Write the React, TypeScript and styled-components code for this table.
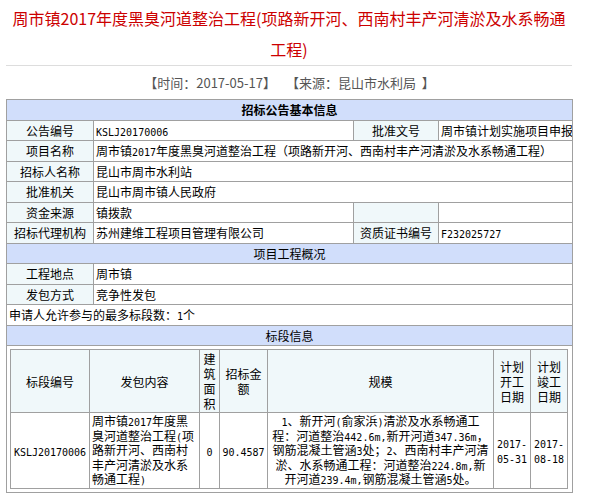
import React from "react";
import styled, { createGlobalStyle } from "styled-components";

const GlobalStyle = createGlobalStyle`
  html, body { margin: 0; padding: 0; background: #ffffff; }
  body { font-family: "Noto Sans CJK SC", "Noto Sans", sans-serif; color: #000000; }
`;

const Page = styled.div`
  width: 567px;
  margin-left: 6px;
`;

const Title = styled.h1`
  margin: 0;
  padding: 3px 4px 0;
  font-size: 16px;
  font-weight: normal;
  line-height: 31px;
  color: #cc0000;
  text-align: center;
  border-bottom: 1px solid #dddddd;
  width: 558px;
`;

const Meta = styled.div`
  display: flex;
  justify-content: center;
  gap: 10px;
  height: 33px;
  line-height: 33px;
  font-size: 13px;
  color: #555555;
  white-space: pre;
`;

const InfoTable = styled.table`
  width: 567px;
  border-collapse: collapse;
  table-layout: fixed;
  font-size: 12px;
  line-height: 15px;
`;

const Row = styled.tr`
  height: 20.5px;
`;

const Cell = styled.td`
  border: 1px solid #a0a0a0;
  padding: 0 2px;
  white-space: nowrap;
  overflow: hidden;
`;

const HeadCell = styled(Cell)<{ $bold?: boolean }>`
  background: #d1defb;
  text-align: center;
  font-weight: ${(p) => (p.$bold ? 700 : 400)};
`;

const LabelCell = styled(Cell)`
  background: #f0f8fa;
  text-align: center;
`;

const ValueCell = styled(Cell)`
  background: #ffffff;
  text-align: left;
`;

const NestCell = styled.td`
  border: 1px solid #a0a0a0;
  padding: 3px;
`;

const LotTable = styled.table`
  width: 558px;
  border-collapse: collapse;
  table-layout: fixed;
  font-size: 12px;
  line-height: 15px;
`;

const LotHead = styled.th`
  border: 1px solid #a0a0a0;
  background: #f0f8fa;
  font-weight: normal;
  padding: 1px 2px;
  text-align: center;
  vertical-align: middle;
`;

const LotCell = styled.td<{ $align?: "left" | "center" }>`
  border: 1px solid #a0a0a0;
  padding: 1px 2px;
  text-align: ${(p) => p.$align ?? "center"};
  vertical-align: middle;
`;

const Line = styled.span`
  display: block;
  white-space: nowrap;
  line-height: 14.6px;
`;

const Latin = styled.span`
  font-family: "DejaVu Sans Mono", monospace;
  font-size: 10px;
  line-height: 1;
`;

const Mixed = ({ text }: { text: string }) => {
  const parts = text.split(/([\x20-\x7e]+)/);
  return (
    <>
      {parts.map((p, i) =>
        i % 2 === 1 ? <Latin key={i}>{p}</Latin> : <React.Fragment key={i}>{p}</React.Fragment>
      )}
    </>
  );
};

const mainCols = [87, 260, 85, 134];
const lotCols = [79, 110, 20, 48, 226, 37, 37];

const contentLines = ["周市镇2017年度黑", "臭河道整治工程(项", "路新开河、西南村", "丰产河清淤及水系", "畅通工程)"];
const scaleLines = [
  "1、新开河(俞家浜)清淤及水系畅通工",
  "程：河道整治442.6m,新开河道347.36m，",
  "钢筋混凝土管涵3处；2、西南村丰产河清",
  "淤、水系畅通工程：河道整治224.8m,新",
  "开河道239.4m,钢筋混凝土管涵5处。",
];

const Lines = ({ lines }: { lines: string[] }) => (
  <>
    {lines.map((l, i) => (
      <Line key={i}>
        <Mixed text={l} />
      </Line>
    ))}
  </>
);

export default function App() {
  return (
    <>
      <GlobalStyle />
      <Page>
        <Title>周市镇2017年度黑臭河道整治工程(项路新开河、西南村丰产河清淤及水系畅通工程)</Title>
        <Meta>
          <span>【时间：2017-05-17】</span>
          <span>{"【来源：昆山市水利局\u00a0\u00a0】"}</span>
        </Meta>
        <InfoTable>
          <colgroup>
            {mainCols.map((w, i) => (
              <col key={i} style={{ width: w }} />
            ))}
          </colgroup>
          <tbody>
            <Row>
              <HeadCell colSpan={4} $bold>招标公告基本信息</HeadCell>
            </Row>
            <Row>
              <LabelCell>公告编号</LabelCell>
              <ValueCell><Latin>KSLJ20170006</Latin></ValueCell>
              <LabelCell>批准文号</LabelCell>
              <ValueCell>周市镇计划实施项目申报</ValueCell>
            </Row>
            <Row>
              <LabelCell>项目名称</LabelCell>
              <ValueCell colSpan={3}>
                <Mixed text="周市镇2017年度黑臭河道整治工程（项路新开河、西南村丰产河清淤及水系畅通工程）" />
              </ValueCell>
            </Row>
            <Row>
              <LabelCell>招标人名称</LabelCell>
              <ValueCell colSpan={3}>昆山市周市水利站</ValueCell>
            </Row>
            <Row>
              <LabelCell>批准机关</LabelCell>
              <ValueCell colSpan={3}>昆山市周市镇人民政府</ValueCell>
            </Row>
            <Row>
              <LabelCell>资金来源</LabelCell>
              <ValueCell>镇拨款</ValueCell>
              <LabelCell></LabelCell>
              <ValueCell></ValueCell>
            </Row>
            <Row>
              <LabelCell>招标代理机构</LabelCell>
              <ValueCell>苏州建维工程项目管理有限公司</ValueCell>
              <LabelCell>资质证书编号</LabelCell>
              <ValueCell><Latin>F232025727</Latin></ValueCell>
            </Row>
            <Row>
              <HeadCell colSpan={4}>项目工程概况</HeadCell>
            </Row>
            <Row>
              <LabelCell>工程地点</LabelCell>
              <ValueCell colSpan={3}>周市镇</ValueCell>
            </Row>
            <Row>
              <LabelCell>发包方式</LabelCell>
              <ValueCell colSpan={3}>竞争性发包</ValueCell>
            </Row>
            <Row>
              <ValueCell colSpan={4}>
                <Mixed text="申请人允许参与的最多标段数：1个" />
              </ValueCell>
            </Row>
            <Row>
              <HeadCell colSpan={4}>标段信息</HeadCell>
            </Row>
            <tr>
              <NestCell colSpan={4}>
                <LotTable>
                  <colgroup>
                    {lotCols.map((w, i) => (
                      <col key={i} style={{ width: w }} />
                    ))}
                  </colgroup>
                  <tbody>
                    <tr>
                      <LotHead>标段编号</LotHead>
                      <LotHead>发包内容</LotHead>
                      <LotHead>建筑面积</LotHead>
                      <LotHead>招标金额</LotHead>
                      <LotHead>规模</LotHead>
                      <LotHead>计划开工日期</LotHead>
                      <LotHead>计划竣工日期</LotHead>
                    </tr>
                    <tr>
                      <LotCell><Latin>KSLJ20170006</Latin></LotCell>
                      <LotCell $align="left"><Lines lines={contentLines} /></LotCell>
                      <LotCell><Latin>0</Latin></LotCell>
                      <LotCell><Latin>90.4587</Latin></LotCell>
                      <LotCell><Lines lines={scaleLines} /></LotCell>
                      <LotCell><Latin>2017-<wbr />05-31</Latin></LotCell>
                      <LotCell><Latin>2017-<wbr />08-18</Latin></LotCell>
                    </tr>
                  </tbody>
                </LotTable>
              </NestCell>
            </tr>
          </tbody>
        </InfoTable>
      </Page>
    </>
  );
}
